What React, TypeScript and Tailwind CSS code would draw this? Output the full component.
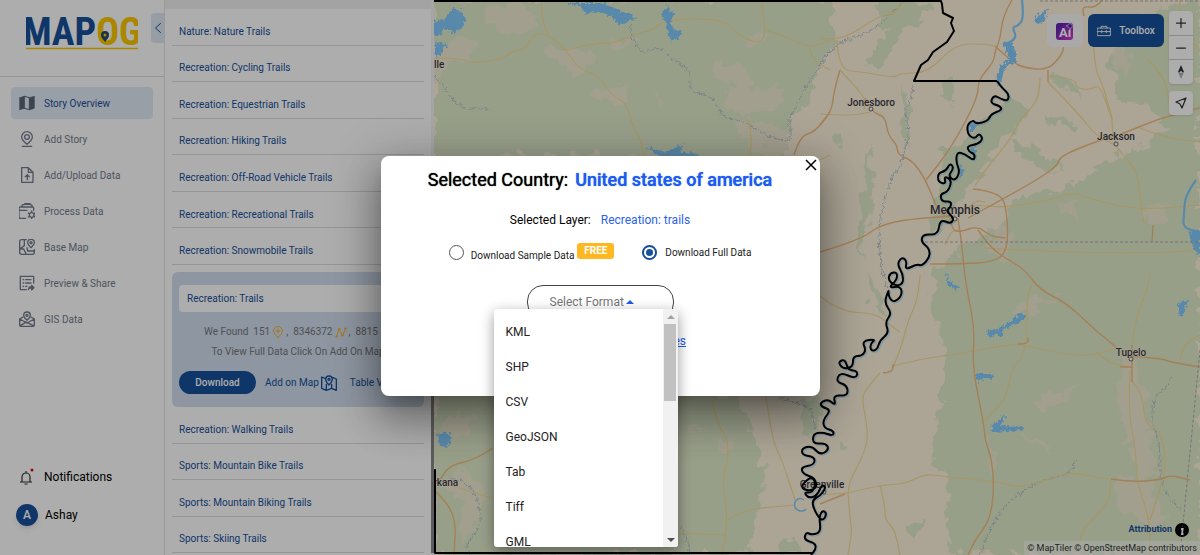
import { useState, type ReactNode } from "react";

type Point = [number, number];

const parse = (s: string): Point[] =>
  s.split(" ").map((p) => p.split(",").map(Number) as Point);

// rounds a polyline off by running quadratic curves through its midpoints
const smooth = (s: string) => {
  const p = parse(s);
  let d = `M${p[0][0]} ${p[0][1]}`;
  for (let i = 1; i < p.length - 1; i++) {
    const mx = (p[i][0] + p[i + 1][0]) / 2;
    const my = (p[i][1] + p[i + 1][1]) / 2;
    d += ` Q${p[i][0]} ${p[i][1]} ${mx} ${my}`;
  }
  const last = p[p.length - 1];
  return `${d} L${last[0]} ${last[1]}`;
};

const stateLine =
  "434,1 941,1 942,4 943,13 953,18 951,23 954,31 947,42 933,52 928,60 921,65 914,81 997,81";

const mississippi =
  "997,81 1002,88 1009,94 1008,101 1001,99 994,95 990,103 1000,106 1002,110 991,114 988,121 976,124 973,120 967,125 968,135 975,139 979,133 983,139 978,144 967,146 969,152 975,154 974,161 965,154 957,152 956,162 960,172 955,181 948,176 954,168 950,163 946,171 938,173 938,182 946,184 944,176 952,180 948,192 940,194 942,202 951,201 951,207 946,211 954,218 951,224 940,219 938,235 923,234 921,242 929,248 930,257 922,266 917,264 905,270 907,261 902,257 897,264 903,274 903,284 895,286 888,280 890,273 897,272 897,280 888,288 901,286 902,296 893,303 888,295 889,289 884,303 892,313 885,322 889,333 880,340 877,350 871,351 870,344 876,339 862,341 866,350 862,356 853,356 853,367 843,369 838,362 845,359 848,370 858,371 856,379 840,372 836,382 847,385 848,396 833,395 836,406 828,399 820,403 822,407 831,410 823,420 824,428 834,431 833,436 822,432 813,434 813,444 826,443 829,450 820,455 812,446 802,448 802,455 815,457 814,465 801,467 803,474 815,478 817,488 808,491 800,487 811,476 816,483 812,493 804,492 808,498 817,496 822,484 826,488 820,496 812,500 814,510 822,522 827,514 823,510 819,516 821,532 812,535 806,532 804,540 815,543 816,549 811,555";

const greens = [
  "434,0 700,0 760,0 830,0 838,40 822,60 818,80 800,105 790,130 785,160 640,160 600,155 434,160",
  "434,380 560,385 700,390 740,400 752,430 764,470 758,500 750,555 434,555",
  "878,0 912,0 930,10 905,30 892,50 880,72 870,60 884,30",
  "940,80 952,75 954,100 945,105",
  "930,240 945,150 960,150 975,130 1010,95 1030,110 1020,125 1000,140 985,165 965,190 955,215",
  "1052,74 1075,80 1082,104 1070,90 1054,84",
  "1130,20 1200,0 1200,555 950,555 945,480 935,455 940,400 948,350 930,300 935,270 975,240 1000,225 1010,200 1060,190 1130,150 1170,130 1150,110 1118,100 1110,60",
  "1012,138 1050,160 1065,170 1040,168 1015,150",
  "1045,115 1080,125 1078,135 1050,122",
  "865,270 880,285 886,320 872,300",
  "868,140 874,180 868,240 862,260 858,240 864,180",
  "905,85 912,95 912,135 902,145 905,110",
  "833,138 843,130 842,145 836,150",
  "837,440 848,446 846,452 836,450",
  "800,400 815,396 822,402 812,440 806,430",
  "779,540 795,535 800,550 780,555",
  "910,525 922,522 918,535 908,532",
];

const tans = [
  "485,10 520,0 540,20 530,32 500,32 484,24",
  "548,48 590,48 600,60 590,70 572,72 552,60",
  "612,40 640,36 632,42 612,46",
  "434,50 455,35 476,42 470,56 450,66 434,80",
  "590,95 626,86 630,98 610,104",
  "720,60 745,66 752,90 780,88 785,100 760,112 740,118 724,100 734,86 712,70",
  "750,30 768,36 766,44 752,42",
  "735,125 760,118 790,135 780,160 760,150",
  "655,94 668,98 664,106",
  "440,430 460,410 475,420 462,438",
  "455,470 480,478 485,505 472,530 460,545 462,500 445,482",
  "720,440 735,444 732,450 718,448",
  "690,428 698,420 700,430 692,438",
  "1030,300 1010,318 1050,304 1060,296",
  "1030,402 1050,396 1080,385 1070,398 1040,412",
  "1020,435 1045,440 1052,455 1038,445",
  "1125,350 1140,385 1150,430 1158,470 1140,480 1128,440 1118,390",
  "1112,478 1150,480 1165,520 1150,530 1120,505",
  "990,230 1010,225 1008,260 985,250",
  "1110,40 1125,34 1130,70 1120,76",
  "1140,210 1170,206 1160,222 1144,220",
  "1060,205 1080,200 1076,215 1062,214",
  "985,436 990,470 998,490 992,450",
];

const yellowRoads = [
  "434,58 460,58 470,63 500,60 515,50 526,49 533,34 548,34 566,50 580,70 597,74 612,96 626,102 634,130 641,140 644,156",
  "566,50 600,42 612,44 640,32 652,31 664,20 712,18 732,26 740,36 756,43 765,38 764,20 762,4",
  "541,0 542,20 548,34",
  "765,30 790,38 810,48 830,40",
  "810,48 812,60 830,70",
  "748,120 752,135 750,156",
  "820,38 840,42 880,15 892,16 905,0",
  "837,40 838,70 864,72 895,78 900,73 928,73 955,44 985,44 995,46",
  "840,70 855,86 866,100 864,110",
  "820,114 850,116 870,112",
  "1040,78 1040,95 1030,110 1020,120 1010,140 985,170 975,186",
  "1048,76 1075,78 1076,88 1090,90 1100,84 1112,120",
  "1092,30 1095,70 1102,82 1112,118",
  "1048,82 1080,115 1095,135 1115,145",
  "1112,118 1112,140 1125,158 1138,172 1142,220 1148,225",
  "1140,128 1165,138 1200,142",
  "958,210 975,204 1000,208 1050,200 1072,192 1100,202 1140,210 1200,205",
  "960,215 975,200 985,202",
  "945,245 950,232 958,230",
  "985,248 1050,252 1160,253 1200,250",
  "920,275 918,300 908,320 902,345 892,370 893,366",
  "893,366 915,360 970,352 1010,344 1030,346 1060,354 1090,356 1110,350 1120,348",
  "1096,352 1110,364 1130,367",
  "1027,342 1026,300 1032,285",
  "1025,345 1022,360 1012,366 1006,400 985,420",
  "880,373 865,390 862,400 868,430 866,450 850,480 848,493",
  "820,296 840,312 875,313 890,325 900,332",
  "848,493 880,485 905,484 925,474 940,476 980,480 1000,482 1020,488 1045,480 1070,472 1100,478 1110,479",
  "848,493 850,520 852,530 848,555",
  "880,485 885,505 885,520 895,530 900,555",
  "820,495 848,493",
  "1150,270 1148,290 1138,310 1132,345",
  "1132,382 1142,390 1145,425 1160,430 1168,465 1150,520",
  "1130,370 1128,410 1136,450 1136,480 1150,520 1150,555",
  "1180,360 1182,345 1200,335",
  "1111,479 1110,500 1100,512 1082,530 1080,540",
  "712,400 718,425 728,440 728,460 722,480 728,520 722,555",
  "766,396 772,440 782,460 795,500",
  "680,533 725,535",
  "728,520 740,512 760,508 795,505",
  "450,485 480,495 500,500",
  "820,160 830,155",
  "1148,60 1165,75 1170,110",
  "1180,0 1178,30 1200,50",
];

const orangeRoads = [
  "1012,0 1003,15 1000,40 995,50 994,62 978,80 978,98 950,150 926,180",
  "995,46 1012,62 1025,68 1048,70 1062,55 1064,45",
  "1048,70 1048,82",
  "1102,0 1096,8 1082,6 1084,16",
  "840,70 834,90 832,110 820,125",
  "865,98 872,113 885,116 888,135 897,145 898,155 912,160 926,180 940,216 952,216",
  "820,252 860,240 880,225 910,219 955,216",
  "968,218 1010,195 1040,178 1058,165 1060,156 1100,140 1120,135 1160,118 1200,108",
  "973,189 1000,192 1007,210 1008,250 995,262 960,264 930,264",
  "950,218 952,230 960,232 978,226 990,236 1005,238",
  "958,218 962,245 965,280 975,330 972,365 984,425 985,440 992,460 994,490 990,520 975,540 968,555",
  "978,230 990,248 1012,262 1025,270 1040,290 1065,302 1090,325 1100,334 1115,346 1120,352",
  "1132,345 1132,382",
  "1120,367 1132,367",
  "1125,356 1160,358 1170,362 1200,367",
  "1111,479 1130,482 1160,480 1170,475 1190,480",
  "1018,344 1028,344 1028,338",
  "883,373 893,372 893,364",
  "820,504 845,494",
  "493,448 475,460 450,465 440,480 434,485",
  "434,490 445,500 456,520 454,555",
  "1152,242 1153,225",
  "794,155 800,136 815,132 830,112",
];

const streams = [
  "434,76 442,82 450,98 462,108 472,110 478,107 490,110",
  "630,25 632,38 642,54 655,48 662,48 672,60 685,65 692,78 688,90 705,94 715,100 722,118 742,120 760,132 778,140 792,142 788,120 800,100 806,85 816,72 830,50",
  "1172,375 1165,390 1155,395 1150,420 1160,440 1160,480 1170,500 1182,510",
  "980,555 990,525 1010,500 1040,480 1070,475 1076,460",
  "913,85 912,100 904,110 910,125 905,150 900,168 890,180 885,200 878,225 880,250 882,275 890,295",
  "820,62 835,46 850,38 875,30 905,0",
  "440,482 455,478 470,485 478,500 482,525 465,545 470,555",
  "780,398 800,404 812,408 815,430",
  "680,525 688,540 690,555",
];

const rivers = [
  "1022,0 1024,18 1018,26 1012,27 1017,38 1006,44 1004,42",
  "1000,70 1004,66 1000,82",
  "1196,180 1185,195 1184,215 1183,228 1200,232",
];

const lakes = [
  "1002,42 1012,42 1016,52 1016,62 1006,66 1001,76 1000,86 996,84 1000,66 1010,60",
  "1034,18 1040,14 1048,8 1050,4 1044,20 1038,25",
  "434,22 446,18 452,8 462,12 466,20 462,28 452,34 444,28 440,34 434,36",
  "434,42 448,44 442,52 436,60",
  "566,3 600,3 616,8 628,14 636,18 628,22 620,26 612,16 600,12 586,14 580,6",
  "660,14 666,8 668,4 670,10 674,14 670,22 676,32 682,30 678,38 672,42 668,34 666,22",
  "645,147 665,152 685,144 680,152 700,154 690,158 660,157",
  "987,332 1000,328 1020,314 1026,314 1025,320 1002,330 1002,338 996,334 990,338",
  "975,374 995,374 994,379 984,378 978,382",
  "991,424 998,422 1004,414 1006,416 1000,426 1022,427 1024,430 993,432",
  "945,272 950,282 960,288 956,290 948,286",
  "1178,304 1188,300 1184,312 1181,318 1178,312",
  "1188,232 1200,230 1200,256 1194,250 1192,242",
  "437,434 450,432 451,444 445,448 438,443",
  "970,124 984,120 976,126 970,134",
  "970,148 976,146 976,158 970,154",
  "960,165 964,170 962,176 958,174",
];

function CityLabel({ x, y, size = 10, dot, children }: { x: number; y: number; size?: number; dot?: Point; children: string }) {
  return (
    <>
      {dot && <circle cx={dot[0]} cy={dot[1]} r="2" fill="#fff" stroke="#555" strokeWidth="0.9" />}
      <text x={x} y={y} textAnchor="middle" fontSize={size} className="fill-[#3a3a40] font-medium" stroke="#fff3e0" strokeWidth="1" paintOrder="stroke">
        {children}
      </text>
    </>
  );
}

function MapCanvas() {
  return (
    <svg
      className="block h-full w-full bg-[#fef3de]"
      viewBox="434 0 766 555"
      preserveAspectRatio="xMidYMid slice"
      aria-label="Map"
    >
      <defs>
        <filter id="rough" x="-5%" y="-5%" width="110%" height="110%">
          <feTurbulence type="fractalNoise" baseFrequency="0.07" numOctaves="3" seed="4" />
          <feDisplacementMap in="SourceGraphic" scale="22" xChannelSelector="R" yChannelSelector="G" />
        </filter>
        <filter id="shore" x="-20%" y="-20%" width="140%" height="140%">
          <feTurbulence type="fractalNoise" baseFrequency="0.3" numOctaves="2" seed="2" />
          <feDisplacementMap in="SourceGraphic" scale="7" xChannelSelector="R" yChannelSelector="G" />
        </filter>
      </defs>
      <g filter="url(#rough)" fill="#e1ebcb">
        {greens.map((g) => (
          <polygon key={g} points={g} />
        ))}
      </g>
      <g filter="url(#rough)" fill="#f5ebd5" opacity="0.8">
        {tans.map((t) => (
          <polygon key={t} points={t} />
        ))}
      </g>
      <g fill="none" stroke="#a9bccb" strokeWidth="0.9">
        {streams.map((s) => (
          <path key={s} d={smooth(s)} filter="url(#shore)" />
        ))}
      </g>
      <g fill="none" stroke="#f6dd95" strokeWidth="1.2">
        {yellowRoads.map((r) => (
          <path key={r} d={smooth(r)} />
        ))}
      </g>
      <g fill="none" stroke="#f2bd7f" strokeWidth="1.4">
        {orangeRoads.map((r) => (
          <path key={r} d={smooth(r)} />
        ))}
      </g>
      <g fill="none" stroke="#84cbfb" strokeWidth="2.2">
        {rivers.map((r) => (
          <path key={r} d={smooth(r)} />
        ))}
        <path d="M804 500c-6-4-11 2-9 7s9 5 11 2" strokeWidth="1.5" />
        <path d={smooth(mississippi)} strokeWidth="3" transform="translate(1 1)" opacity="0.45" />
      </g>
      <g fill="#84cbfb" filter="url(#shore)">
        {lakes.map((l) => (
          <polygon key={l} points={l} />
        ))}
      </g>
      <path d="M1040 1H1200M925 242H1200M1200 350L1180 555" fill="none" stroke="#b0aaa8" strokeWidth="1" strokeDasharray="3 2" />
      <CityLabel x={871} y={106} dot={[871, 109]}>Jonesboro</CityLabel>
      <CityLabel x={1116} y={140} dot={[1116, 144]}>Jackson</CityLabel>
      <CityLabel x={955} y={214} size={12} dot={[955, 219]}>Memphis</CityLabel>
      <CityLabel x={1131} y={356} dot={[1131, 359]}>Tupelo</CityLabel>
      <CityLabel x={822} y={488} dot={[824, 492]}>Greenville</CityLabel>
      <CityLabel x={419} y={68}>Fayetteville</CityLabel>
      <CityLabel x={435} y={486}>Texarkana</CityLabel>
      <g fill="none" stroke="#000" strokeWidth="2" strokeLinejoin="round">
        <path d={`M${stateLine}`} />
        <path d={smooth(mississippi)} />
        <path d="M435 469V553H812" />
      </g>
    </svg>
  );
}

function Icon({ children, className = "h-4 w-4" }: { children: ReactNode; className?: string }) {
  return (
    <svg
      viewBox="0 0 24 24"
      className={`shrink-0 ${className}`}
      fill="none"
      stroke="currentColor"
      strokeWidth="2"
      strokeLinecap="round"
      strokeLinejoin="round"
      aria-hidden="true"
    >
      {children}
    </svg>
  );
}

const menu = [
  {
    label: "Story Overview",
    icon: (
      <>
        <path d="M1 4L8 2V20L1 22ZM16 4L23 2V20L16 22Z" fill="currentColor" strokeWidth="1" />
        <path d="M8 2L16 4V22L8 20Z" strokeWidth="1.5" />
      </>
    ),
  },
  {
    label: "Add Story",
    icon: (
      <>
        <path d="M12 20C7 16 4 12.500 4 9a8 8 0 0 1 16 0c0 3.500-3 7-8 11zM5 23h14" />
        <circle cx="12" cy="9" r="3.500" />
      </>
    ),
  },
  {
    label: "Add/Upload Data",
    icon: <path d="M14 1H4v22h17V8zM14 1v7h7M12.500 19v-7M9.500 14.500l3-3 3 3" />,
  },
  {
    label: "Process Data",
    icon: (
      <>
        <path d="M22 11V8a2 2 0 0 0-2-2H2a2 2 0 0 0-2 2v13a2 2 0 0 0 2 2h8M0 11h12M4 6c0-3 2-4 4-4h8c3 0 4 1 4 4M8 2l2-2h5l2 2" />
        <circle cx="19" cy="18" r="3.500" />
        <path d="M19 12v2M19 22v2M14 15l1.500 1M22.500 20l1.500 1M14 21l1.500-1M22.500 16l1.500-1" />
      </>
    ),
  },
  {
    label: "Base Map",
    icon: (
      <>
        <path d="M11 1H4a3 3 0 0 0-3 3v16a3 3 0 0 0 3 3h16a3 3 0 0 0 3-3v-4M8 1v9L1 15M1 15h6l4 8M13 18h10M12 13c0 3 1 5 4 5" />
        <path d="M18 13c-3-3-5-5-5-7.500a5 5 0 0 1 10 0C23 8 21 10 18 13z" />
        <circle cx="18" cy="5.500" r="1.500" />
      </>
    ),
  },
  {
    label: "Preview & Share",
    icon: (
      <>
        <path d="M22 12V2H2v20h9M6 7h1M10 7h8M6 12h1M10 12h8M6 17h1M10 17h2" />
        <path d="M14 22c0-4 2-5 5-5v-2l4 4-4 4v-3c-2 0-4 0-5 2z" fill="currentColor" strokeWidth="1.5" />
      </>
    ),
  },
  {
    label: "GIS Data",
    icon: (
      <>
        <path d="M6 9L1 12v9a2 2 0 0 0 2 2h18a2 2 0 0 0 2-2v-9l-5-3M1 12l11 6 11-6M2 22l8-5M22 22L9 16" />
        <path d="M12 14c-4-3-5-5-5-7.500a5 5 0 0 1 10 0C17 9 16 11 12 14z" />
        <circle cx="12" cy="6.500" r="1.500" />
      </>
    ),
  },
];

function Logo() {
  return (
    <a href="#home" className="block w-[112px]" aria-label="MAPOG">
      <svg viewBox="0 0 112 38" className="block w-full">
        <text
          x="56"
          y="32"
          textAnchor="middle"
          fontSize="38"
          fontWeight="700"
          fontFamily="'Liberation Sans Narrow','Roboto Condensed','Open Sans Condensed',sans-serif"
          fill="#17509a"
        >
          MAP<tspan fill="#fdc800">OG</tspan>
        </text>
        <path d="M0 35.500H112" stroke="#fdc800" strokeWidth="1.500" />
        <path d="M79 29c-2-3-4-4-4-7a4 4 0 0 1 8 0c0 3-2 4-4 7z" fill="#224a70" />
        <circle cx="79" cy="22" r="1.500" fill="#fdc800" />
      </svg>
    </a>
  );
}

function Sidebar() {
  return (
    <aside className="flex w-[165px] shrink-0 flex-col border-r border-[#e4e4e4] bg-white">
      <div className="flex h-[77px] items-start justify-between border-b border-[#dcdcdc] pl-[26px] pt-[13px]">
        <Logo />
        <button aria-label="Collapse" className="flex h-[30px] w-[13px] items-center justify-center rounded-l bg-[#dfe7f3] text-[#17509a]">
          <Icon className="h-4 w-3"><path d="M17 3L7 12l10 9" /></Icon>
        </button>
      </div>
      <nav className="flex flex-col gap-1 px-[11px] pt-[10px]">
        {menu.map((m, i) => (
          <a
            key={m.label}
            href="#menu"
            className={
              i === 0
                ? "flex h-8 items-center gap-[9px] rounded bg-[#e2eaf5] px-2 text-[10px] text-[#17509a]"
                : "flex h-8 items-center gap-[9px] rounded px-2 text-[10px] text-[#737b8d]"
            }
          >
            <Icon className={i === 0 ? "h-4 w-4 text-[#5c6478]" : "h-4 w-4 text-[#737b8d]"}>{m.icon}</Icon>
            {m.label}
          </a>
        ))}
      </nav>
      <div className="mt-auto flex flex-col gap-[18px] pb-[29px] pl-4">
        <button className="flex items-center gap-2.5 text-left text-[12px] text-black">
          <svg viewBox="0 0 18 18" className="h-[18px] w-[18px]" fill="none" stroke="#333" strokeWidth="1.200" aria-hidden="true">
            <path d="M4 14h12M6 14V9a4 4 0 0 1 8 0v5M10 5V3M8.500 16h3" />
            <circle cx="16" cy="2" r="1.500" fill="#e00" stroke="none" />
          </svg>
          Notifications
        </button>
        <button className="flex items-center gap-[7px] text-left text-[12px] text-black">
          <span className="flex h-[22px] w-[22px] items-center justify-center rounded-full bg-[#17509a] text-[12px] font-medium text-white shadow-md">
            A
          </span>
          Ashay
        </button>
      </div>
    </aside>
  );
}

const layersTop = [
  "Nature: Nature Trails",
  "Recreation: Cycling Trails",
  "Recreation: Equestrian Trails",
  "Recreation: Hiking Trails",
  "Recreation: Off-Road Vehicle Trails",
  "Recreation: Recreational Trails",
  "Recreation: Snowmobile Trails",
];

const layersBottom = [
  "Recreation: Walking Trails",
  "Sports: Mountain Bike Trails",
  "Sports: Mountain Biking Trails",
  "Sports: Skiing Trails",
];

function LayerRow({ children }: { children: string }) {
  return (
    <li className="flex items-center border-b border-[#dcdcdc] px-[7px] pt-[10px]">
      <a href="#layer" className="text-[10px] leading-4 text-[#17509a]">
        {children}
      </a>
    </li>
  );
}

function LayerPanel() {
  return (
    <section className="flex w-[269px] shrink-0 bg-white">
      <div className="flex min-w-0 flex-1 flex-col">
        <div className="h-[9px] shrink-0 bg-[#f0f0f0]" />
        <div className="flex flex-col pl-[7px] pr-[7px]">
          <ul className="grid h-[256px] auto-rows-fr">
            {layersTop.map((l) => (
              <LayerRow key={l}>{l}</LayerRow>
            ))}
          </ul>
          <div className="mt-[7px] rounded-md bg-[#d1ddee] px-[7px] pb-[13px] pt-[13px]">
            <div className="flex h-[27px] items-center rounded bg-white px-2 text-[10px] text-[#17509a]">
              Recreation: Trails
            </div>
            <div className="pt-[10px] text-center text-[10px] leading-5 text-[#777]">
              <p className="flex items-center justify-center gap-[2px] whitespace-nowrap">
                We Found&nbsp; 151
                <Icon className="h-3 w-3 text-[#f0b429]">
                  <path d="M12 23c-5-5-9-9-9-13a9 9 0 0 1 18 0c0 4-4 8-9 13zM12 6v8M8 10h8" />
                </Icon>
                ,&nbsp; 8346372
                <Icon className="h-3 w-3 text-[#f0b429]">
                  <path d="M3 21L8 6l7 13 6-14" />
                  <circle cx="3" cy="21" r="1.500" />
                  <circle cx="8" cy="6" r="1.500" />
                  <circle cx="15" cy="19" r="1.500" />
                  <circle cx="21" cy="5" r="1.500" />
                </Icon>
                ,&nbsp; 8815
                <Icon className="h-3 w-3 text-[#f0b429]">
                  <path d="M3 8l9-6 9 6-3 13H6z" />
                </Icon>
              </p>
              <p>To View Full Data Click On Add On Map</p>
            </div>
            <div className="flex items-center gap-[9px] whitespace-nowrap pt-[9px] text-[10px] text-[#17509a]">
              <button className="h-[23px] w-[77px] shrink-0 rounded-full bg-[#17509a] font-medium text-white">
                Download
              </button>
              <button className="flex items-center gap-0.5">
                Add on Map
                <Icon className="h-4 w-4">
                  <path d="M6 5L1 3v17l7 3 8-3 7 3V6l-5-2M8 23v-9M16 20v-6M12 15C8 11 7 9 7 6.500a5 5 0 0 1 10 0C17 9 16 11 12 15z" />
                  <circle cx="12" cy="6.500" r="1.500" />
                </Icon>
              </button>
              <button className="pl-1">Table View</button>
            </div>
          </div>
          <ul className="grid h-[146px] auto-rows-fr">
            {layersBottom.map((l) => (
              <LayerRow key={l}>{l}</LayerRow>
            ))}
          </ul>
        </div>
      </div>
      <div className="flex w-[3px] flex-col bg-[#f4f4f4] pb-[2px]">
        <div className="mt-auto h-1/2 bg-[#888]" />
      </div>
    </section>
  );
}

function MapControls() {
  return (
    <div className="absolute right-[7px] top-[11px] flex items-start gap-[5px]">
      <button aria-label="AI" className="mt-[3px] flex h-[33px] w-9 items-center justify-center rounded-md bg-[#fafafa]">
        <svg viewBox="0 0 18 18" className="h-[18px] w-[18px]">
          <defs>
            <linearGradient id="ai" x1="0" y1="0" x2="1" y2="1">
              <stop offset="0" stopColor="#4a1fb0" />
              <stop offset="1" stopColor="#d83ccb" />
            </linearGradient>
          </defs>
          <rect y="1" width="17" height="17" rx="3" fill="url(#ai)" />
          <text x="3" y="14.500" fontSize="13" fontWeight="700" fill="#fff">Aı</text>
          <path d="M14 0l1.200 2.800L18 4l-2.800 1.200L14 8l-1.200-2.800L10 4l2.800-1.200z" fill="#4a1fb0" stroke="#fafafa" strokeWidth="0.600" />
        </svg>
      </button>
      <button className="mt-[3px] flex h-[33px] w-[76px] items-center justify-center gap-2 rounded-md bg-[#17509a] text-[10px] font-medium text-white">
        <Icon className="h-[14px] w-[14px]">
          <path d="M1 7h22v13H1zM7 7V4h10v3M1 13h6M17 13h6M9 13h6M8 11v4M16 11v4" strokeWidth="1.500" />
        </Icon>
        Toolbox
      </button>
      <div className="flex flex-col gap-[7px] text-[#333]">
        <div className="divide-y divide-[#ccc] rounded bg-white shadow-sm">
          <button aria-label="Zoom in" className="flex h-[25px] w-6 items-center justify-center">
            <Icon className="h-3 w-3"><path d="M12 3v18M3 12h18" strokeWidth="2.500" /></Icon>
          </button>
          <button aria-label="Zoom out" className="flex h-[24px] w-6 items-center justify-center">
            <Icon className="h-3 w-3"><path d="M3 12h18" strokeWidth="2.500" /></Icon>
          </button>
          <button aria-label="Reset bearing" className="flex h-6 w-6 items-center justify-center">
            <svg viewBox="0 0 12 16" className="h-4 w-3">
              <path d="M6 1l3 7H3z" fill="#333" />
              <path d="M6 15l3-7H3z" fill="#aab0ba" />
              <circle cx="6" cy="8" r="1" fill="#fff" />
            </svg>
          </button>
        </div>
        <button aria-label="My location" className="flex h-6 w-6 items-center justify-center rounded bg-white shadow-sm">
          <Icon className="h-3 w-3"><path d="M22 2L2 10l8 4 4 8z" strokeWidth="2.500" /></Icon>
        </button>
      </div>
    </div>
  );
}

function MapAttribution() {
  return (
    <div className="absolute bottom-0 right-0 flex flex-col items-end">
      <div className="flex items-center gap-[2px] pb-[3px] pr-[10px] font-bold text-[#17509a]">
        <a href="#attribution" className="text-[9px]">Attribution</a>
        <svg viewBox="0 0 16 16" className="h-4 w-4">
          <circle cx="8" cy="8" r="7" fill="#000" />
          <path d="M8.500 4h.2M7 7h1.700L8 12h1.500" stroke="#fff" strokeWidth="1.800" fill="none" />
        </svg>
      </div>
      <p className="whitespace-nowrap bg-white/50 px-[3px] text-[9px] leading-[14px] text-[#333]">
        <a href="#maptiler">© MapTiler</a> <a href="#osm">© OpenStreetMap contributors</a>
      </p>
    </div>
  );
}

const formats = ["KML", "SHP", "CSV", "GeoJSON", "Tab", "Tiff", "GML"];

function FormatMenu({ onPick }: { onPick: (f: string) => void }) {
  return (
    <div className="absolute left-[-33px] top-[24px] z-10 flex h-[238px] w-[184px] overflow-hidden rounded-[3px] bg-white shadow-[0_4px_14px_rgba(0,0,0,0.4)]">
      <ul role="listbox" aria-label="Formats" className="min-w-0 flex-1 pt-[5px]">
        {formats.map((f) => (
          <li
            key={f}
            role="option"
            aria-selected="false"
            onClick={() => onPick(f)}
            className="flex h-[35px] cursor-pointer items-center px-3 text-[12px] text-[#222]"
          >
            {f}
          </li>
        ))}
      </ul>
      <div className="flex w-[15px] flex-col items-center bg-[#f1f1f1]">
        <svg viewBox="0 0 15 15" className="h-[15px] w-[15px] shrink-0"><path d="M4 10h8l-4-4z" fill="#a3a3a3" /></svg>
        <div className="h-[77px] w-3 bg-[#c1c1c1]" />
        <svg viewBox="0 0 15 15" className="mt-auto h-[15px] w-[15px] shrink-0"><path d="M4 6h8l-4 4z" fill="#505050" /></svg>
      </div>
    </div>
  );
}

function DownloadDialog() {
  const [kind, setKind] = useState("full");
  const [format, setFormat] = useState("");

  return (
    <div
      role="dialog"
      aria-labelledby="dialog-title"
      className="relative mb-[3px] flex h-[240px] w-full max-w-[439px] flex-col items-center rounded-lg bg-white pt-3 shadow-[0_11px_15px_-7px_rgba(0,0,0,0.2),0_24px_38px_3px_rgba(0,0,0,0.24),0_9px_46px_8px_rgba(0,0,0,0.22)]"
    >
      <button aria-label="Close" className="absolute right-[3px] top-[3px] text-black">
        <svg viewBox="0 0 12 12" className="h-3 w-3" stroke="currentColor" strokeWidth="1.500">
          <path d="M1 1l10 10M11 1L1 11" />
        </svg>
      </button>
      <h2 id="dialog-title" className="flex gap-[7px] text-[18px] leading-6 text-black [text-shadow:0_0_1px_currentColor]">
        Selected Country:
        <span className="font-medium text-[#1d5bf0]">United states of america</span>
      </h2>
      <p className="flex gap-[10px] pt-[18px] text-[12px] leading-5 text-black">
        Selected Layer:
        <span className="text-[#2b62ea]">Recreation: trails</span>
      </p>
      <div className="flex items-start pt-[13px] text-[10px] leading-5 text-[#222]">
        <input
          id="sample"
          type="radio"
          name="kind"
          checked={kind === "sample"}
          onChange={() => setKind("sample")}
          className="mt-[2px] h-[15px] w-[15px] appearance-none rounded-full border border-[#555] bg-clip-content p-[3px] checked:border-2 checked:border-[#17509a] checked:bg-[#17509a] checked:p-[2px]"
        />
        <label htmlFor="sample" className="flex gap-[3px] pl-[7px]">
          <span className="pt-[3px]">Download Sample Data</span>
          <span className="h-4 w-[37px] rounded-[3px] bg-[#ffb822] text-center text-[10px] font-bold leading-4 text-white">FREE</span>
        </label>
        <input
          id="full"
          type="radio"
          name="kind"
          checked={kind === "full"}
          onChange={() => setKind("full")}
          className="ml-7 mt-[2px] h-[15px] w-[15px] appearance-none rounded-full border border-[#555] bg-clip-content p-[3px] checked:border-2 checked:border-[#17509a] checked:bg-[#17509a] checked:p-[2px]"
        />
        <label htmlFor="full" className="pl-2">Download Full Data</label>
      </div>
      <div className="relative mt-[19px] w-[147px]">
        <select
          aria-label="Select Format"
          value={format}
          onChange={(e) => setFormat(e.target.value)}
          className="h-[34px] w-full appearance-none rounded-2xl border border-[#444] bg-white pl-[22px] text-[12px] text-[#777]"
        >
          <option value="">Select Format</option>
          {formats.map((f) => (
            <option key={f}>{f}</option>
          ))}
        </select>
        <svg viewBox="0 0 8 4" className="pointer-events-none absolute left-[99px] top-[15px] h-1 w-2"><path d="M0 4h8L4 0z" fill="#1d5bf0" /></svg>
        <FormatMenu onPick={setFormat} />
      </div>
      <p className="flex w-[172px] justify-end pt-3 text-[12px] leading-5">
        <a href="#attributes" className="text-[#2b62ea] underline">View Data Attributes</a>
      </p>
    </div>
  );
}

export default function App() {
  return (
    <div className="relative flex h-screen overflow-hidden bg-white font-['Roboto',sans-serif]">
      <Sidebar />
      <LayerPanel />
      <main className="relative min-w-0 flex-1">
        <MapCanvas />
        <MapControls />
        <MapAttribution />
      </main>
      <div className="absolute inset-0 flex items-center justify-center bg-black/32">
        <DownloadDialog />
      </div>
    </div>
  );
}
